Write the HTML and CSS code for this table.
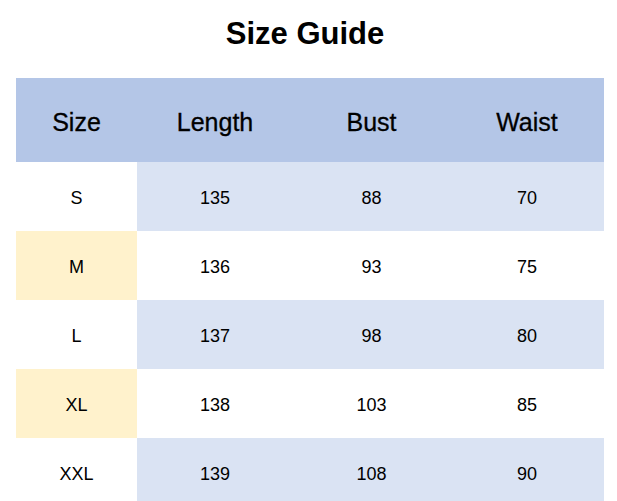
FILE: index.html
```html
<!DOCTYPE html>
<html>
<head>
<meta charset="utf-8">
<link rel="stylesheet" href="styles.css">
</head>
<body>
<h1 class="title">Size Guide</h1>
<div class="table">
  <div class="cell head">Size</div>
  <div class="cell head">Length</div>
  <div class="cell head">Bust</div>
  <div class="cell head">Waist</div>

  <div class="cell">S</div>
  <div class="cell blue">135</div>
  <div class="cell blue">88</div>
  <div class="cell blue">70</div>

  <div class="cell yellow">M</div>
  <div class="cell">136</div>
  <div class="cell">93</div>
  <div class="cell">75</div>

  <div class="cell">L</div>
  <div class="cell blue">137</div>
  <div class="cell blue">98</div>
  <div class="cell blue">80</div>

  <div class="cell yellow">XL</div>
  <div class="cell">138</div>
  <div class="cell">103</div>
  <div class="cell">85</div>

  <div class="cell">XXL</div>
  <div class="cell blue">139</div>
  <div class="cell blue">108</div>
  <div class="cell blue">90</div>
</div>
</body>
</html>
```
FILE: styles.css
```css
html, body {
  margin: 0;
  padding: 0;
  background: #ffffff;
  font-family: "Liberation Sans", Arial, sans-serif;
  color: #000;
}

.title {
  margin: 0;
  padding: 17px 7px 0 0;
  height: 61px;
  line-height: 34px;
  font-size: 31px;
  font-weight: bold;
  text-align: center;
}

.table {
  margin-left: 16px;
  width: 588px;
  display: grid;
  grid-template-columns: 121px 156px 157px 154px;
  grid-template-rows: 84px repeat(5, 69px);
}

.cell {
  display: flex;
  align-items: center;
  justify-content: center;
  font-size: 18px;
  padding-top: 3px;
  box-sizing: border-box;
}

.head {
  background: #b4c6e7;
  font-size: 25px;
  padding-top: 4px;
  -webkit-text-stroke: 0.3px #000;
}

.blue {
  background: #dae3f3;
}

.yellow {
  background: #fff2cc;
}
```
